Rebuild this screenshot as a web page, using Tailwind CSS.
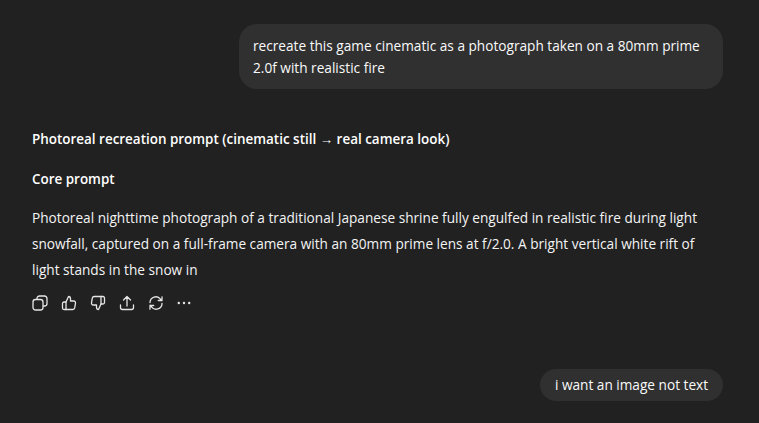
<!DOCTYPE html>
<html lang="en">
<head>
  <meta charset="UTF-8">
  <title>Chat</title>
  <script src="https://cdn.jsdelivr.net/npm/@tailwindcss/browser@4"></script>
</head>
<body class="bg-[#212121] h-[423px] w-[759px] overflow-hidden font-['Open_Sans',sans-serif] text-[13.65px] text-[#f4f4f4]">
  <main class="flex flex-col pt-[24px] pl-[32px] pr-[36px]">
    <div class="self-end w-[484px] h-[65px] rounded-[18px] bg-[#303030] px-[14px] py-[11px] leading-[22px] text-[#fafafa]">
      recreate this game cinematic as a photograph taken on a 80mm prime 2.0f with realistic fire
    </div>

    <div class="mt-[37px] w-[680px]">
      <p class="font-semibold text-[13.45px] leading-[26px] text-white">Photoreal recreation prompt (cinematic still → real camera look)</p>
      <p class="font-semibold text-[13.45px] leading-[26px] mt-[14px] text-white">Core prompt</p>
      <p class="leading-[26px] mt-[13px]">Photoreal nighttime photograph of a traditional Japanese shrine fully engulfed in realistic fire during light snowfall, captured on a full-frame camera with an 80mm prime lens at f/2.0. A bright vertical white rift of light stands in the snow in</p>
    </div>

    <div class="mt-[12px] flex items-center gap-[13px] text-[#e6e6e6]">
      <svg class="w-[16px] h-[16px]" viewBox="0 0 16 16" fill="none" stroke="currentColor" stroke-width="1.3" stroke-linejoin="round"><rect x="1" y="4.5" width="10" height="10.5" rx="2.5"/><path d="M5 4.500V3.500A2.500 2.500 0 0 1 7.500 1h5A2.500 2.500 0 0 1 15 3.500v5a2.500 2.500 0 0 1-2.500 2.500H11"/></svg>
      <svg class="w-[16px] h-[16px]" viewBox="0 0 16 16" fill="none" stroke="currentColor" stroke-width="1.300" stroke-linejoin="round" stroke-linecap="round"><path d="M5 7l2.500-5.500c1.300 0 2 1 2 2.200V6h3.300c1.100 0 1.900 1 1.700 2.100l-.8 4.800c-.2.900-.9 1.600-1.900 1.600H5z"/><path d="M5 7H3c-.9 0-1.500.6-1.500 1.500v4.500c0 .9.600 1.500 1.500 1.500h2"/></svg>
      <svg class="w-[16px] h-[16px]" viewBox="0 0 16 16" fill="none" stroke="currentColor" stroke-width="1.300" stroke-linejoin="round" stroke-linecap="round"><path d="M11 9l-2.500 5.500c-1.300 0-2-1-2-2.200V10H3.200c-1.100 0-1.900-1-1.700-2.100l.8-4.800c.2-.9.900-1.600 1.900-1.600H11z"/><path d="M11 9h2c.9 0 1.500-.6 1.500-1.500V3c0-.9-.6-1.500-1.500-1.500h-2"/></svg>
      <svg class="w-[16px] h-[16px]" viewBox="0 0 16 16" fill="none" stroke="currentColor" stroke-width="1.300" stroke-linejoin="round" stroke-linecap="round"><path d="M8 11V1.500M4.500 5L8 1.500 11.500 5"/><path d="M1.500 10v2.500c0 1.200.8 2 2 2h9c1.200 0 2-.8 2-2V10"/></svg>
      <svg class="w-[16px] h-[16px]" viewBox="0 0 16 16" fill="none" stroke="currentColor" stroke-width="1.300" stroke-linejoin="round" stroke-linecap="round"><path d="M2 7.500A5.800 5.800 0 0 1 12.500 4.200L14 5.500M14 1.800v3.700h-3.700"/><path d="M14 8.500A5.800 5.800 0 0 1 3.500 11.800L2 10.500M2 14.200v-3.700h3.700"/></svg>
      <svg class="w-[16px] h-[16px] -ml-[1px]" viewBox="0 0 16 16" fill="currentColor"><circle cx="2.800" cy="8" r="1.200"/><circle cx="8" cy="8" r="1.200"/><circle cx="13.200" cy="8" r="1.200"/></svg>
    </div>

    <div class="self-end mt-[58px] h-[32px] w-[183px] text-center rounded-full bg-[#303030] leading-[32px] text-[#fafafa] whitespace-nowrap">i want an image not text</div>
  </main>
</body>
</html>
